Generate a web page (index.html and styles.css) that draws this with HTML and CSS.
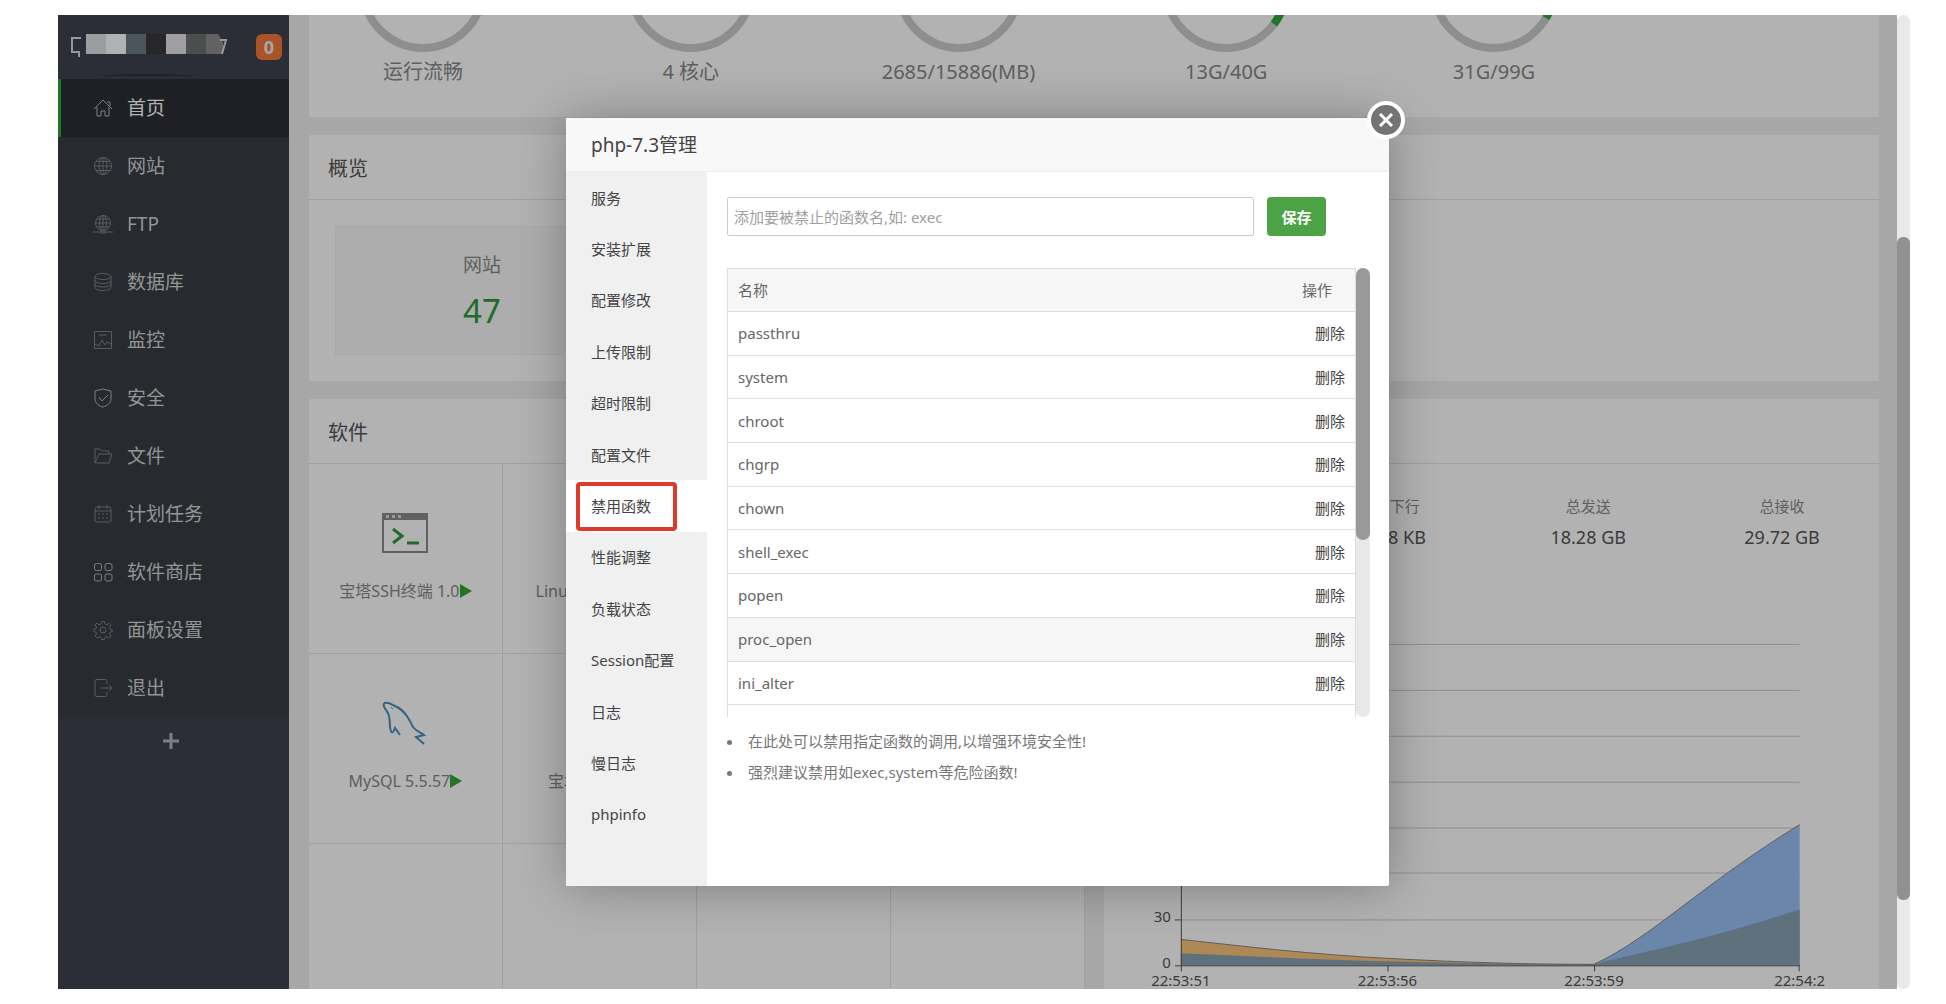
FILE: index.html
```html
<!DOCTYPE html>
<html lang="zh-CN">
<head>
<meta charset="utf-8">
<title>php-7.3管理</title>
<link rel="stylesheet" href="styles.css">
</head>
<body>
<div class="screen">
  <aside class="sidebar">
    <div class="account">
      <svg class="account-name" width="160" height="44" viewBox="0 0 160 44">
        <path d="M13 5H4v14h8M11 20v4" fill="none" stroke="#d8dade" stroke-width="2"/>
        <path d="M18 1h20v20H18z" fill="#dfe1e6"/><path d="M38 1h20v20H38z" fill="#fdfeff"/><path d="M58 1h20v20H58z" fill="#6c7a82"/><path d="M78 1h20v20H78z" fill="#38373a"/><path d="M98 1h20v20H98z" fill="#e8e4ea"/><path d="M118 1h20v20h-20z" fill="#6a706f"/><path d="M138 1h12l5 8v12h-17z" fill="#908c90"/>
        <path d="M152 7h6l-4 14" fill="none" stroke="#d8dade" stroke-width="2"/>
        <path d="M28 43q50-4 104 0z" fill="#2c2e34"/>
      </svg>
      <span class="badge">0</span>
    </div>
    <nav class="menu">
      <a class="menu-item active" href="#"><svg class="icon" viewBox="0 0 20 20"><path d="M1 11l9-9 9 9M4 9v9h4v-5h4v5h4V9M14 4h3v4"/></svg>首页</a>
      <a class="menu-item" href="#"><svg class="icon" viewBox="0 0 20 20"><circle cx="10" cy="10" r="8.500"/><ellipse cx="10" cy="10" rx="4" ry="8.500"/><path d="M10 1v18M1 10h18M3 5.500h14M3 14.500h14"/></svg>网站</a>
      <a class="menu-item" href="#"><svg class="icon" viewBox="0 0 20 20"><circle cx="10" cy="9" r="7.500"/><ellipse cx="10" cy="9" rx="3.500" ry="7.500"/><path d="M10 1v16M3 9h14M4 5h12M4 13h12M0 18h8M12 18h8M8 17h4v2H8z"/></svg>FTP</a>
      <a class="menu-item" href="#"><svg class="icon" viewBox="0 0 20 20"><ellipse cx="10" cy="4.500" rx="8" ry="3"/><path d="M2 4.500v11c0 4 16 4 16 0v-11M2 8.500c0 4 16 4 16 0M2 12c0 4 16 4 16 0"/></svg>数据库</a>
      <a class="menu-item" href="#"><svg class="icon" viewBox="0 0 20 20"><path d="M1.500 1.500h17v17h-17zM2 14l4 2 3-6 3 5 2-3 4 2M6 5h8"/></svg>监控</a>
      <a class="menu-item" href="#"><svg class="icon bright" viewBox="0 0 20 20"><path d="M10 1l8 2v8c0 4-4 7-8 8-4-1-8-4-8-8V3zM6 9l3 4 6-6"/></svg>安全</a>
      <a class="menu-item" href="#"><svg class="icon" viewBox="0 0 20 20"><path d="M2 17V3h5l2 2h7v3M2 17h14l3-9H6z"/></svg>文件</a>
      <a class="menu-item" href="#"><svg class="icon" viewBox="0 0 20 20"><rect x="2" y="3" width="16" height="15" rx="2"/><path d="M2 7h16M6 1v4M14 1v4M5 10h2M9 10h2M13 10h2M5 14h2M9 14h2M13 14h2"/></svg>计划任务</a>
      <a class="menu-item" href="#"><svg class="icon bright" viewBox="0 0 20 20"><rect x="1.500" y="1.500" width="7" height="7" rx="2"/><rect x="12" y="1.500" width="7" height="7" rx="2"/><rect x="1.500" y="12" width="7" height="7" rx="2"/><rect x="12" y="12" width="7" height="7" rx="2"/></svg>软件商店</a>
      <a class="menu-item" href="#"><svg class="icon" viewBox="0 0 20 20"><path d="M8.500 1.500h3l.5 2.500 2 .8 2-1.600 2 2-1.500 2.200.8 2 2 .6v1.500l-2 .6-.8 2 1.500 2-2 2-2-1.500-2 .9-.5 2h-3l-.5-2-2-.9-2 1.500-2-2 1.500-2-.8-2-2-.6V9.500l2-.6.8-2L2 5l2-2 2 1.800 2-.8z"/><circle cx="10" cy="10" r="3"/></svg>面板设置</a>
      <a class="menu-item" href="#"><svg class="icon" viewBox="0 0 20 20"><path d="M14 6V3q0-1.500-1.500-1.500h-9Q2 1.500 2 3v14q0 1.500 1.500 1.500h9q1.500 0 1.500-1.500v-3M8 10h11M16 7l3 3-3 3"/></svg>退出</a>
    </nav>
    <button class="add" aria-label="添加"><svg width="18" height="18" viewBox="0 0 18 18"><path d="M9 1v16M1 9h16" stroke="#b4b6ba" stroke-width="3"/></svg></button>
  </aside>

  <main class="main">
    <section class="panel gauges">
      <div class="gauge"><svg width="128" height="37" viewBox="0 91 128 37"><circle cx="64" cy="64" r="60"/></svg><span>运行流畅</span></div>
      <div class="gauge"><svg width="128" height="37" viewBox="0 91 128 37"><circle cx="64" cy="64" r="60"/></svg><span>4 核心</span></div>
      <div class="gauge"><svg width="128" height="37" viewBox="0 91 128 37"><circle cx="64" cy="64" r="60"/></svg><span>2685/15886(MB)</span></div>
      <div class="gauge"><svg width="128" height="37" viewBox="0 91 128 37"><circle cx="64" cy="64" r="60"/><path d="M64 4A60 60 0 0 1 112 100"/></svg><span>13G/40G</span></div>
      <div class="gauge"><svg width="128" height="37" viewBox="0 91 128 37"><circle cx="64" cy="64" r="60"/><path d="M64 4A60 60 0 0 1 116 94"/></svg><span>31G/99G</span></div>
    </section>

    <section class="panel">
      <h2>概览</h2>
      <div class="overview"><div class="stat-box"><span>网站</span><a href="#">47</a></div></div>
    </section>

    <div class="columns">
      <section class="panel">
        <h2>软件</h2>
        <div class="apps">
          <div class="app">
            <svg width="48" height="48" viewBox="0 0 48 48"><path d="M2 5h44v38H2z" fill="none" stroke="#8c8c8c" stroke-width="2"/><path d="M1 4h46v7H1z" fill="#8c8c8c"/><path d="M5 6h3v3H5zM11 6h3v3h-3zM17 6h3v3h-3z" fill="#ddd"/><path d="M12 20l9 7-9 7M26 34h12" fill="none" stroke="#339838" stroke-width="3"/></svg>
            <span class="app-name">宝塔SSH终端 1.0<i class="play"></i></span>
          </div>
          <div class="app"><span class="app-name">Linux工具箱 1.4<i class="play"></i></span></div>
          <div class="app"></div><div class="app"></div>
          <div class="app">
            <svg width="48" height="48" viewBox="0 0 48 48"><path d="M3 4C1 9 7 11 8 17c1 5 1 7 1 11 1 7 3 7 5 1l5 7M3 4c6-1 8 2 13 4 8 4 12 12 16 20 3 4 7 5 11 8l-8 2 8 7" fill="none" stroke="#4a90bf" stroke-width="2"/><path d="M10 8l2 2" stroke="#4a90bf"/></svg>
            <span class="app-name">MySQL 5.5.57<i class="play"></i></span>
          </div>
          <div class="app"><span class="app-name">宝塔运维 1.0<i class="play"></i></span></div>
          <div class="app"></div><div class="app"></div>
          <div class="app"></div><div class="app"></div><div class="app"></div><div class="app"></div>
        </div>
      </section>
      <section class="panel">
        <h2>流量</h2>
        <div class="traffic">
          <div><span class="key"><i class="dot up"></i>上行</span><b>2.15 KB</b></div>
          <div><span class="key"><i class="dot down"></i>下行</span><b>3.48 KB</b></div>
          <div><span class="key">总发送</span><b>18.28 GB</b></div>
          <div><span class="key">总接收</span><b>29.72 GB</b></div>
        </div>
        <svg class="chart" viewBox="1 0 777 370">
          <path d="M78 24.500H698M78 70.500H698M78 116.500H698M78 162.500H698M78 208.500H698M78 253.500H698M78 300.500H698" stroke="#ccc"/>
          <path d="M78 320C150 328 210 335 285 339S420 345 492 345V346H78z" fill="#f9bd6c" fill-opacity=".9"/>
          <path d="M492 345C550 318 600 265 698 205V346H492z" fill="#98c0f5"/>
          <path d="M78 334C150 337 210 340 285 342S420 345 492 345C550 330 600 322 698 290V346H78z" fill="#88a2b4"/>
          <path d="M78 320C150 328 210 335 285 339S420 345 492 345C550 318 600 265 698 205" fill="none" stroke="#888"/>
          <path d="M78.500 0v346M72 346.500h626M72 300.500h6M78.500 346v6M285.500 346v6M492.500 346v6M697.500 346v6" fill="none" stroke="#555"/>
          <text x="68" y="303" text-anchor="end">30</text><text x="68" y="349" text-anchor="end">0</text>
          <text x="78" y="367" text-anchor="middle">22:53:51</text><text x="285" y="367" text-anchor="middle">22:53:56</text><text x="492" y="367" text-anchor="middle">22:53:59</text><text x="698" y="367" text-anchor="middle">22:54:2</text>
        </svg>
      </section>
    </div>
  </main>

  <div class="scrollbar"><div class="thumb"></div></div>

  <div class="mask">
    <div class="dialog" role="dialog" aria-labelledby="dialog-title">
      <header id="dialog-title">php-7.3管理</header>
      <button class="close" aria-label="关闭"><svg width="14" height="14" viewBox="0 0 14 14"><path d="M1 1l12 12M13 1L1 13" stroke="#fff" stroke-width="3"/></svg></button>
      <div class="dialog-body">
        <nav class="tabs">
          <a href="#">服务</a><a href="#">安装扩展</a><a href="#">配置修改</a><a href="#">上传限制</a><a href="#">超时限制</a><a href="#">配置文件</a><a class="current" href="#">禁用函数</a><a href="#">性能调整</a><a href="#">负载状态</a><a href="#">Session配置</a><a href="#">日志</a><a href="#">慢日志</a><a href="#">phpinfo</a>
        </nav>
        <div class="content">
          <form class="add-form">
            <input type="text" aria-label="函数名" placeholder="添加要被禁止的函数名,如: exec">
            <button type="button">保存</button>
          </form>
          <div class="list">
            <div class="list-view">
              <table>
                <thead><tr><th>名称</th><th class="head-action">操作</th></tr></thead>
                <tbody>
                  <tr><td>passthru</td><td class="action"><a href="#">删除</a></td></tr>
                  <tr><td>system</td><td class="action"><a href="#">删除</a></td></tr>
                  <tr><td>chroot</td><td class="action"><a href="#">删除</a></td></tr>
                  <tr><td>chgrp</td><td class="action"><a href="#">删除</a></td></tr>
                  <tr><td>chown</td><td class="action"><a href="#">删除</a></td></tr>
                  <tr><td>shell_exec</td><td class="action"><a href="#">删除</a></td></tr>
                  <tr><td>popen</td><td class="action"><a href="#">删除</a></td></tr>
                  <tr class="hover"><td>proc_open</td><td class="action"><a href="#">删除</a></td></tr>
                  <tr><td>ini_alter</td><td class="action"><a href="#">删除</a></td></tr>
                  <tr><td></td><td></td></tr>
                </tbody>
              </table>
            </div>
            <div class="list-scroll"><div class="list-thumb"></div></div>
          </div>
          <ul class="tips"><li>在此处可以禁用指定函数的调用,以增强环境安全性!</li><li>强烈建议禁用如exec,system等危险函数!</li></ul>
        </div>
      </div>
    </div>
  </div>
</div>
</body>
</html>
```
FILE: styles.css
```css
* { box-sizing: border-box; }
body {
  margin: 0;
  padding: 15px 36px 15px 58px;
  background: #fff;
  color: #666;
  font: 15px/20px "Noto Sans", "Noto Sans CJK SC", sans-serif;
}
a { color: inherit; text-decoration: none; }
button { border: 0; padding: 0; font: inherit; }
.screen {
  position: relative;
  display: flex;
  height: calc(100vh - 30px);
  overflow: hidden;
}

/* Sidebar */
.sidebar { width: 231px; flex: none; background: #3f434f; }
.account {
  display: flex;
  justify-content: space-between;
  align-items: flex-start;
  height: 64px;
  padding: 18px 7px 0 10px;
}
.badge {
  width: 26px;
  margin-top: 1px;
  border-radius: 6px;
  background: #f4763a;
  color: #eee;
  font-weight: 700;
  font-size: 18px;
  line-height: 26px;
  text-align: center;
}
.menu { display: flex; flex-direction: column; background: #383d43; }
.menu-item {
  display: flex;
  align-items: center;
  gap: 14px;
  height: 58px;
  padding-left: 35px;
  color: #d2d4d6;
  font-size: 19px;
}
.menu-item.active { padding-left: 32px; border-left: 3px solid #2ea838; background: #2c2f35; color: #fff; }
.icon { width: 20px; height: 20px; fill: none; stroke: #7f8488; stroke-width: 1; }
.active .icon, .icon.bright { stroke: #b4b8bb; }
.add { display: block; width: 100%; height: 52px; padding-right: 6px; background: none; }

/* Dashboard */
.main {
  flex: 1;
  display: flex;
  flex-direction: column;
  gap: 18px;
  min-width: 0;
  padding: 0 18px 0 20px;
  background: #f0f0f0;
  overflow: hidden;
}
.panel { flex: none; background: #fff; }
.panel h2 {
  height: 65px;
  margin: 0;
  padding: 0 19px;
  border-bottom: 1px solid #e4e4e4;
  color: #555;
  font-size: 20px;
  font-weight: 400;
  line-height: 68px;
}
.gauges {
  display: grid;
  grid-template-columns: repeat(5, 160px);
  justify-content: space-between;
  height: 102px;
  padding: 0 305px 0 34px;
}
.gauge { display: flex; flex-direction: column; align-items: center; gap: 6px; color: #888; font-size: 20px; line-height: 28px; }
.gauge circle { fill: none; stroke: #ccc; stroke-width: 8; }
.gauge path { fill: none; stroke: #2ea838; stroke-width: 8; }
.overview { padding: 26px; }
.stat-box {
  display: flex;
  flex-direction: column;
  align-items: center;
  gap: 12px;
  width: 294px;
  height: 129px;
  padding-top: 24px;
  background: #f8f8f8;
  border: 1px solid #f3f3f3;
  color: #888;
  font-size: 19px;
  line-height: 28px;
}
.stat-box a { color: #2e9a38; font-size: 33px; line-height: 40px; }
.columns { display: grid; grid-template-columns: 1fr 1fr; gap: 19px; }
.apps { display: grid; grid-template-columns: repeat(4, 1fr); grid-auto-rows: 190px; }
.app {
  display: flex;
  flex-direction: column;
  align-items: center;
  justify-content: flex-end;
  gap: 24px;
  padding-bottom: 52px;
  border-right: 1px solid #e6e6e6;
  border-bottom: 1px solid #e6e6e6;
}
.app-name { display: flex; align-items: center; color: #888; font-size: 16px; white-space: nowrap; }
.play { border-left: 12px solid #2ea838; border-top: 7px solid transparent; border-bottom: 7px solid transparent; }
.traffic { display: grid; grid-template-columns: repeat(4, 1fr); padding-top: 32px; text-align: center; }
.traffic div { display: flex; flex-direction: column; gap: 9px; }
.key { color: #888; }
.traffic b { color: #555; font-size: 18px; font-weight: 400; line-height: 24px; }
.dot { display: inline-block; width: 13px; height: 13px; margin-right: 8px; border-radius: 50%; }
.dot.up { background: #f7b851; }
.dot.down { background: #52a9ff; }
.chart { display: block; width: 100%; margin-top: 71px; }
.chart text { fill: #555; font-size: 15px; }

/* Page scrollbar sits beside the dimmed page */
.scrollbar { width: 13px; flex: none; padding-top: 222px; border-radius: 6px; background: #e9e9e9; }
.thumb { height: 663px; border-radius: 6px; background: #919191; }

/* Dialog */
.mask {
  position: absolute;
  inset: 0 13px 0 0;
  display: flex;
  align-items: center;
  justify-content: center;
  background: rgba(0, 0, 0, .3);
}
.dialog {
  position: relative;
  display: flex;
  flex-direction: column;
  width: 823px;
  height: 768px;
  border-radius: 2px;
  background: #fff;
  box-shadow: 1px 1px 50px rgba(0, 0, 0, .3);
}
.dialog header {
  height: 54px;
  padding: 0 25px;
  border-bottom: 1px solid #eee;
  background: #f8f8f8;
  color: #444;
  font-size: 19px;
  line-height: 54px;
}
.close {
  position: absolute;
  top: -17px;
  right: -16px;
  display: flex;
  align-items: center;
  justify-content: center;
  width: 38px;
  height: 38px;
  border: 4px solid #fff;
  border-radius: 50%;
  background: #747474;
}
.dialog-body { flex: 1; display: flex; min-height: 0; }
.tabs { display: flex; flex-direction: column; width: 141px; padding-bottom: 46px; background: #f0f0f0; color: #444; }
.tabs a { flex: 1; display: flex; align-items: center; padding-left: 25px; }
.tabs .current { position: relative; background: #fff; }
.tabs .current::after {
  content: "";
  position: absolute;
  inset: 2px 30px 1px 10px;
  border: 4px solid #dc3b2b;
  border-radius: 4px;
}
.content { flex: 1; padding: 25px 19px 0 20px; }
.add-form { display: flex; gap: 13px; padding-right: 44px; }
.add-form input {
  flex: 1;
  height: 39px;
  padding: 0 6px;
  border: 1px solid #ccc;
  border-radius: 2px;
  font: inherit;
}
.add-form input::placeholder { color: #a0a0a0; opacity: 1; }
.add-form button { width: 59px; height: 39px; border-radius: 4px; background: #4ca346; color: #fff; font-weight: 700; }
.list { display: flex; height: 449px; margin-top: 32px; }
.list-view { flex: 1; overflow: hidden; }
table { width: 100%; height: 481px; border-collapse: collapse; border: 1px solid #ddd; }
tr { border-bottom: 1px solid #ddd; }
th, td { height: 43px; padding: 0 10px; font-weight: 400; text-align: left; }
th, .hover { background: #f6f6f6; }
.action, .head-action { text-align: right; }
.action { color: #444; }
.head-action { padding-right: 23px; }
.list-scroll { width: 14px; border-radius: 7px; background: #e9e9e9; }
.list-thumb { height: 272px; border-radius: 7px; background: #999; }
.tips { margin: 9px 0 0; padding-left: 17px; color: #777; line-height: 31px; }
.tips li { padding-left: 4px; }
```
